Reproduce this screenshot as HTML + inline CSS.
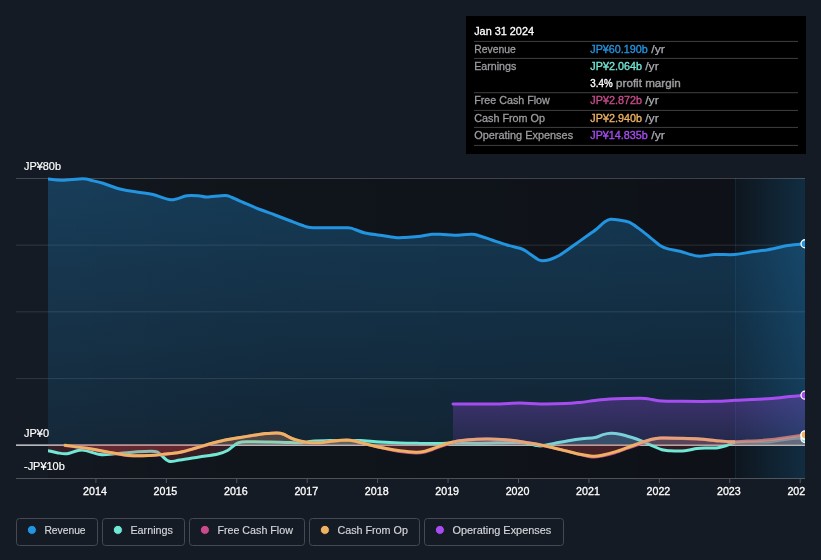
<!DOCTYPE html>
<html lang="en"><head><meta charset="utf-8"><title>Earnings and Revenue History</title>
<style>html,body{margin:0;padding:0;background:#151b24;overflow:hidden}svg{display:block}text{filter:url(#noLCD)}</style></head>
<body>
<svg width="821" height="560" viewBox="0 0 821 560" font-family="'Liberation Sans', Arial, sans-serif" font-size="11">
<defs>
<clipPath id="plot"><rect x="48" y="170" width="757" height="308.5"/></clipPath>
<clipPath id="past"><rect x="48" y="170" width="687" height="308.5"/></clipPath>
<clipPath id="fut"><rect x="735" y="170" width="70" height="308.5"/></clipPath>
<clipPath id="neg"><rect x="48" y="444.4" width="757" height="34.10000000000002"/></clipPath>
<clipPath id="pos"><rect x="48" y="170" width="757" height="274.4"/></clipPath>
<linearGradient id="gRev" x1="0" y1="0" x2="0" y2="1"><stop offset="0" stop-color="#2394df" stop-opacity="0.30"/><stop offset="1" stop-color="#2394df" stop-opacity="0.13"/></linearGradient>
<linearGradient id="gOpex" x1="0" y1="0" x2="0" y2="1"><stop offset="0" stop-color="#a64df0" stop-opacity="0.30"/><stop offset="1" stop-color="#a64df0" stop-opacity="0.12"/></linearGradient>
<linearGradient id="gPlot" x1="0" y1="0" x2="1" y2="0"><stop offset="0" stop-color="#000" stop-opacity="0.10"/><stop offset="0.3" stop-color="#000" stop-opacity="0.24"/><stop offset="1" stop-color="#000" stop-opacity="0.34"/></linearGradient>
<linearGradient id="gHi" x1="0" y1="0" x2="1" y2="0"><stop offset="0" stop-color="#2394df" stop-opacity="0.035"/><stop offset="1" stop-color="#2394df" stop-opacity="0.21"/></linearGradient>
<filter id="noLCD" x="-5%" y="-50%" width="110%" height="200%" color-interpolation-filters="sRGB"><feOffset dx="0" dy="0"/></filter>
</defs>
<rect width="821" height="560" fill="#151b24"/>
<rect x="48" y="178" width="687" height="300.5" fill="url(#gPlot)"/>
<rect x="735" y="178" width="70" height="300.5" fill="#000" fill-opacity="0.34"/>
<rect x="735" y="178" width="70" height="300.5" fill="url(#gHi)"/>
<rect x="735" y="178" width="1" height="300.5" fill="#2394df" fill-opacity="0.12"/>
<rect x="16" y="178" width="789" height="1" fill="#fff" fill-opacity="0.2"/>
<rect x="16" y="244.65" width="789" height="1" fill="#fff" fill-opacity="0.12"/>
<rect x="16" y="311.3" width="789" height="1" fill="#fff" fill-opacity="0.12"/>
<rect x="16" y="378.1" width="789" height="1" fill="#fff" fill-opacity="0.12"/>
<g clip-path="url(#plot)">
<g clip-path="url(#pos)"><path d="M48.00,179.00 C50.33,179.21 56.17,180.29 62.00,180.25 C67.83,180.21 78.00,178.71 83.00,178.75 C88.00,178.79 88.67,179.75 92.00,180.50 C95.33,181.25 98.83,181.96 103.00,183.25 C107.17,184.54 113.00,187.04 117.00,188.25 C121.00,189.46 123.17,189.79 127.00,190.50 C130.83,191.21 135.67,191.83 140.00,192.50 C144.33,193.17 147.83,193.29 153.00,194.50 C158.17,195.71 165.33,199.54 171.00,199.75 C176.67,199.96 182.17,196.38 187.00,195.75 C191.83,195.12 196.67,195.79 200.00,196.00 C203.33,196.21 202.83,197.08 207.00,197.00 C211.17,196.92 220.83,195.42 225.00,195.50 C229.17,195.58 228.67,196.21 232.00,197.50 C235.33,198.79 240.33,201.25 245.00,203.25 C249.67,205.25 255.00,207.54 260.00,209.50 C265.00,211.46 270.00,213.12 275.00,215.00 C280.00,216.88 285.50,219.04 290.00,220.75 C294.50,222.46 298.67,224.12 302.00,225.25 C305.33,226.38 306.17,227.08 310.00,227.50 C313.83,227.92 318.67,227.71 325.00,227.75 C331.33,227.79 343.00,227.46 348.00,227.75 C353.00,228.04 352.17,228.62 355.00,229.50 C357.83,230.38 360.83,232.04 365.00,233.00 C369.17,233.96 375.00,234.50 380.00,235.25 C385.00,236.00 390.83,237.12 395.00,237.50 C399.17,237.88 401.17,237.67 405.00,237.50 C408.83,237.33 413.50,237.04 418.00,236.50 C422.50,235.96 427.83,234.58 432.00,234.25 C436.17,233.92 439.17,234.33 443.00,234.50 C446.83,234.67 450.17,235.29 455.00,235.25 C459.83,235.21 467.83,234.12 472.00,234.25 C476.17,234.38 476.67,235.04 480.00,236.00 C483.33,236.96 487.50,238.50 492.00,240.00 C496.50,241.50 502.00,243.50 507.00,245.00 C512.00,246.50 518.17,247.50 522.00,249.00 C525.83,250.50 527.33,252.25 530.00,254.00 C532.67,255.75 536.00,258.38 538.00,259.50 C540.00,260.62 540.00,260.75 542.00,260.75 C544.00,260.75 547.00,260.46 550.00,259.50 C553.00,258.54 555.83,257.50 560.00,255.00 C564.17,252.50 570.00,248.04 575.00,244.50 C580.00,240.96 586.50,236.25 590.00,233.75 C593.50,231.25 593.58,231.46 596.00,229.50 C598.42,227.54 602.08,223.70 604.50,222.00 C606.92,220.30 607.92,219.60 610.50,219.30 C613.08,219.00 616.92,219.72 620.00,220.20 C623.08,220.68 626.00,220.92 629.00,222.20 C632.00,223.48 634.50,225.38 638.00,227.90 C641.50,230.42 646.33,234.38 650.00,237.30 C653.67,240.22 657.00,243.47 660.00,245.40 C663.00,247.33 664.67,247.92 668.00,248.90 C671.33,249.88 675.00,250.10 680.00,251.30 C685.00,252.50 692.17,255.57 698.00,256.10 C703.83,256.63 708.83,254.77 715.00,254.50 C721.17,254.23 728.83,254.95 735.00,254.50 C741.17,254.05 746.50,252.60 752.00,251.80 C757.50,251.00 762.00,250.73 768.00,249.70 C774.00,248.67 781.83,246.59 788.00,245.60 C794.17,244.61 802.17,244.06 805.00,243.75 L805.00,444.40 L48.00,444.40 Z" fill="url(#gRev)"/></g>
<path d="M48.00,179.00 C50.33,179.21 56.17,180.29 62.00,180.25 C67.83,180.21 78.00,178.71 83.00,178.75 C88.00,178.79 88.67,179.75 92.00,180.50 C95.33,181.25 98.83,181.96 103.00,183.25 C107.17,184.54 113.00,187.04 117.00,188.25 C121.00,189.46 123.17,189.79 127.00,190.50 C130.83,191.21 135.67,191.83 140.00,192.50 C144.33,193.17 147.83,193.29 153.00,194.50 C158.17,195.71 165.33,199.54 171.00,199.75 C176.67,199.96 182.17,196.38 187.00,195.75 C191.83,195.12 196.67,195.79 200.00,196.00 C203.33,196.21 202.83,197.08 207.00,197.00 C211.17,196.92 220.83,195.42 225.00,195.50 C229.17,195.58 228.67,196.21 232.00,197.50 C235.33,198.79 240.33,201.25 245.00,203.25 C249.67,205.25 255.00,207.54 260.00,209.50 C265.00,211.46 270.00,213.12 275.00,215.00 C280.00,216.88 285.50,219.04 290.00,220.75 C294.50,222.46 298.67,224.12 302.00,225.25 C305.33,226.38 306.17,227.08 310.00,227.50 C313.83,227.92 318.67,227.71 325.00,227.75 C331.33,227.79 343.00,227.46 348.00,227.75 C353.00,228.04 352.17,228.62 355.00,229.50 C357.83,230.38 360.83,232.04 365.00,233.00 C369.17,233.96 375.00,234.50 380.00,235.25 C385.00,236.00 390.83,237.12 395.00,237.50 C399.17,237.88 401.17,237.67 405.00,237.50 C408.83,237.33 413.50,237.04 418.00,236.50 C422.50,235.96 427.83,234.58 432.00,234.25 C436.17,233.92 439.17,234.33 443.00,234.50 C446.83,234.67 450.17,235.29 455.00,235.25 C459.83,235.21 467.83,234.12 472.00,234.25 C476.17,234.38 476.67,235.04 480.00,236.00 C483.33,236.96 487.50,238.50 492.00,240.00 C496.50,241.50 502.00,243.50 507.00,245.00 C512.00,246.50 518.17,247.50 522.00,249.00 C525.83,250.50 527.33,252.25 530.00,254.00 C532.67,255.75 536.00,258.38 538.00,259.50 C540.00,260.62 540.00,260.75 542.00,260.75 C544.00,260.75 547.00,260.46 550.00,259.50 C553.00,258.54 555.83,257.50 560.00,255.00 C564.17,252.50 570.00,248.04 575.00,244.50 C580.00,240.96 586.50,236.25 590.00,233.75 C593.50,231.25 593.58,231.46 596.00,229.50 C598.42,227.54 602.08,223.70 604.50,222.00 C606.92,220.30 607.92,219.60 610.50,219.30 C613.08,219.00 616.92,219.72 620.00,220.20 C623.08,220.68 626.00,220.92 629.00,222.20 C632.00,223.48 634.50,225.38 638.00,227.90 C641.50,230.42 646.33,234.38 650.00,237.30 C653.67,240.22 657.00,243.47 660.00,245.40 C663.00,247.33 664.67,247.92 668.00,248.90 C671.33,249.88 675.00,250.10 680.00,251.30 C685.00,252.50 692.17,255.57 698.00,256.10 C703.83,256.63 708.83,254.77 715.00,254.50 C721.17,254.23 728.83,254.95 735.00,254.50 C741.17,254.05 746.50,252.60 752.00,251.80 C757.50,251.00 762.00,250.73 768.00,249.70 C774.00,248.67 781.83,246.59 788.00,245.60 C794.17,244.61 802.17,244.06 805.00,243.75" fill="none" stroke="#2394df" stroke-width="3" stroke-linejoin="round" stroke-linecap="round"/>
</g>
<rect x="16" y="444.4" width="789" height="1.5" fill="#c6c9cd"/>
<g clip-path="url(#plot)">
<g clip-path="url(#pos)"><path d="M48.00,450.60 C49.50,450.95 53.83,452.18 57.00,452.70 C60.17,453.22 62.83,454.20 67.00,453.75 C71.17,453.30 76.50,449.88 82.00,450.00 C87.50,450.12 94.50,453.88 100.00,454.50 C105.50,455.12 109.17,454.17 115.00,453.75 C120.83,453.33 128.33,452.38 135.00,452.00 C141.67,451.62 150.67,451.00 155.00,451.50 C159.33,452.00 158.67,453.37 161.00,455.00 C163.33,456.63 165.83,460.47 169.00,461.30 C172.17,462.13 175.00,460.72 180.00,460.00 C185.00,459.28 192.67,458.00 199.00,457.00 C205.33,456.00 213.17,455.13 218.00,454.00 C222.83,452.87 224.67,452.03 228.00,450.20 C231.33,448.37 234.33,444.40 238.00,443.00 C241.67,441.60 244.67,441.97 250.00,441.80 C255.33,441.63 263.33,441.87 270.00,442.00 C276.67,442.13 284.17,442.53 290.00,442.60 C295.83,442.67 301.67,442.60 305.00,442.40 C308.33,442.20 305.83,441.72 310.00,441.40 C314.17,441.08 323.83,440.65 330.00,440.50 C336.17,440.35 342.00,440.50 347.00,440.50 C352.00,440.50 354.50,440.25 360.00,440.50 C365.50,440.75 373.33,441.58 380.00,442.00 C386.67,442.42 393.33,442.77 400.00,443.00 C406.67,443.23 413.33,443.30 420.00,443.40 C426.67,443.50 434.50,443.67 440.00,443.60 C445.50,443.53 446.33,443.07 453.00,443.00 C459.67,442.93 468.83,443.28 480.00,443.20 C491.17,443.12 510.83,442.15 520.00,442.50 C529.17,442.85 531.33,444.75 535.00,445.30 C538.67,445.85 538.67,446.13 542.00,445.80 C545.33,445.47 550.33,444.20 555.00,443.30 C559.67,442.40 565.50,441.17 570.00,440.40 C574.50,439.63 577.83,439.18 582.00,438.70 C586.17,438.22 591.50,438.18 595.00,437.50 C598.50,436.82 600.33,435.30 603.00,434.60 C605.67,433.90 608.17,433.37 611.00,433.30 C613.83,433.23 616.50,433.50 620.00,434.20 C623.50,434.90 628.33,436.33 632.00,437.50 C635.67,438.67 638.67,439.85 642.00,441.20 C645.33,442.55 648.67,444.17 652.00,445.60 C655.33,447.03 659.00,448.95 662.00,449.80 C665.00,450.65 666.17,450.55 670.00,450.70 C673.83,450.85 680.50,451.07 685.00,450.70 C689.50,450.33 693.17,448.95 697.00,448.50 C700.83,448.05 704.50,448.12 708.00,448.00 C711.50,447.88 714.83,448.23 718.00,447.80 C721.17,447.37 724.17,446.30 727.00,445.40 C729.83,444.50 731.17,442.97 735.00,442.40 C738.83,441.83 744.17,442.12 750.00,442.00 C755.83,441.88 763.33,442.25 770.00,441.70 C776.67,441.15 784.17,439.32 790.00,438.70 C795.83,438.08 802.50,438.12 805.00,438.00 L805.00,444.40 L48.00,444.40 Z" fill="#71e7d6" fill-opacity="0.22"/></g>
<g clip-path="url(#neg)"><path d="M48.00,450.60 C49.50,450.95 53.83,452.18 57.00,452.70 C60.17,453.22 62.83,454.20 67.00,453.75 C71.17,453.30 76.50,449.88 82.00,450.00 C87.50,450.12 94.50,453.88 100.00,454.50 C105.50,455.12 109.17,454.17 115.00,453.75 C120.83,453.33 128.33,452.38 135.00,452.00 C141.67,451.62 150.67,451.00 155.00,451.50 C159.33,452.00 158.67,453.37 161.00,455.00 C163.33,456.63 165.83,460.47 169.00,461.30 C172.17,462.13 175.00,460.72 180.00,460.00 C185.00,459.28 192.67,458.00 199.00,457.00 C205.33,456.00 213.17,455.13 218.00,454.00 C222.83,452.87 224.67,452.03 228.00,450.20 C231.33,448.37 234.33,444.40 238.00,443.00 C241.67,441.60 244.67,441.97 250.00,441.80 C255.33,441.63 263.33,441.87 270.00,442.00 C276.67,442.13 284.17,442.53 290.00,442.60 C295.83,442.67 301.67,442.60 305.00,442.40 C308.33,442.20 305.83,441.72 310.00,441.40 C314.17,441.08 323.83,440.65 330.00,440.50 C336.17,440.35 342.00,440.50 347.00,440.50 C352.00,440.50 354.50,440.25 360.00,440.50 C365.50,440.75 373.33,441.58 380.00,442.00 C386.67,442.42 393.33,442.77 400.00,443.00 C406.67,443.23 413.33,443.30 420.00,443.40 C426.67,443.50 434.50,443.67 440.00,443.60 C445.50,443.53 446.33,443.07 453.00,443.00 C459.67,442.93 468.83,443.28 480.00,443.20 C491.17,443.12 510.83,442.15 520.00,442.50 C529.17,442.85 531.33,444.75 535.00,445.30 C538.67,445.85 538.67,446.13 542.00,445.80 C545.33,445.47 550.33,444.20 555.00,443.30 C559.67,442.40 565.50,441.17 570.00,440.40 C574.50,439.63 577.83,439.18 582.00,438.70 C586.17,438.22 591.50,438.18 595.00,437.50 C598.50,436.82 600.33,435.30 603.00,434.60 C605.67,433.90 608.17,433.37 611.00,433.30 C613.83,433.23 616.50,433.50 620.00,434.20 C623.50,434.90 628.33,436.33 632.00,437.50 C635.67,438.67 638.67,439.85 642.00,441.20 C645.33,442.55 648.67,444.17 652.00,445.60 C655.33,447.03 659.00,448.95 662.00,449.80 C665.00,450.65 666.17,450.55 670.00,450.70 C673.83,450.85 680.50,451.07 685.00,450.70 C689.50,450.33 693.17,448.95 697.00,448.50 C700.83,448.05 704.50,448.12 708.00,448.00 C711.50,447.88 714.83,448.23 718.00,447.80 C721.17,447.37 724.17,446.30 727.00,445.40 C729.83,444.50 731.17,442.97 735.00,442.40 C738.83,441.83 744.17,442.12 750.00,442.00 C755.83,441.88 763.33,442.25 770.00,441.70 C776.67,441.15 784.17,439.32 790.00,438.70 C795.83,438.08 802.50,438.12 805.00,438.00 L805.00,444.40 L48.00,444.40 Z" fill="#e2464f" fill-opacity="0.175"/></g>
<g clip-path="url(#past)"><path d="M48.00,450.60 C49.50,450.95 53.83,452.18 57.00,452.70 C60.17,453.22 62.83,454.20 67.00,453.75 C71.17,453.30 76.50,449.88 82.00,450.00 C87.50,450.12 94.50,453.88 100.00,454.50 C105.50,455.12 109.17,454.17 115.00,453.75 C120.83,453.33 128.33,452.38 135.00,452.00 C141.67,451.62 150.67,451.00 155.00,451.50 C159.33,452.00 158.67,453.37 161.00,455.00 C163.33,456.63 165.83,460.47 169.00,461.30 C172.17,462.13 175.00,460.72 180.00,460.00 C185.00,459.28 192.67,458.00 199.00,457.00 C205.33,456.00 213.17,455.13 218.00,454.00 C222.83,452.87 224.67,452.03 228.00,450.20 C231.33,448.37 234.33,444.40 238.00,443.00 C241.67,441.60 244.67,441.97 250.00,441.80 C255.33,441.63 263.33,441.87 270.00,442.00 C276.67,442.13 284.17,442.53 290.00,442.60 C295.83,442.67 301.67,442.60 305.00,442.40 C308.33,442.20 305.83,441.72 310.00,441.40 C314.17,441.08 323.83,440.65 330.00,440.50 C336.17,440.35 342.00,440.50 347.00,440.50 C352.00,440.50 354.50,440.25 360.00,440.50 C365.50,440.75 373.33,441.58 380.00,442.00 C386.67,442.42 393.33,442.77 400.00,443.00 C406.67,443.23 413.33,443.30 420.00,443.40 C426.67,443.50 434.50,443.67 440.00,443.60 C445.50,443.53 446.33,443.07 453.00,443.00 C459.67,442.93 468.83,443.28 480.00,443.20 C491.17,443.12 510.83,442.15 520.00,442.50 C529.17,442.85 531.33,444.75 535.00,445.30 C538.67,445.85 538.67,446.13 542.00,445.80 C545.33,445.47 550.33,444.20 555.00,443.30 C559.67,442.40 565.50,441.17 570.00,440.40 C574.50,439.63 577.83,439.18 582.00,438.70 C586.17,438.22 591.50,438.18 595.00,437.50 C598.50,436.82 600.33,435.30 603.00,434.60 C605.67,433.90 608.17,433.37 611.00,433.30 C613.83,433.23 616.50,433.50 620.00,434.20 C623.50,434.90 628.33,436.33 632.00,437.50 C635.67,438.67 638.67,439.85 642.00,441.20 C645.33,442.55 648.67,444.17 652.00,445.60 C655.33,447.03 659.00,448.95 662.00,449.80 C665.00,450.65 666.17,450.55 670.00,450.70 C673.83,450.85 680.50,451.07 685.00,450.70 C689.50,450.33 693.17,448.95 697.00,448.50 C700.83,448.05 704.50,448.12 708.00,448.00 C711.50,447.88 714.83,448.23 718.00,447.80 C721.17,447.37 724.17,446.30 727.00,445.40 C729.83,444.50 731.17,442.97 735.00,442.40 C738.83,441.83 744.17,442.12 750.00,442.00 C755.83,441.88 763.33,442.25 770.00,441.70 C776.67,441.15 784.17,439.32 790.00,438.70 C795.83,438.08 802.50,438.12 805.00,438.00" fill="none" stroke="#71e7d6" stroke-width="3" stroke-linejoin="round" stroke-linecap="round"/></g>
<g clip-path="url(#fut)" opacity="0.55"><path d="M48.00,450.60 C49.50,450.95 53.83,452.18 57.00,452.70 C60.17,453.22 62.83,454.20 67.00,453.75 C71.17,453.30 76.50,449.88 82.00,450.00 C87.50,450.12 94.50,453.88 100.00,454.50 C105.50,455.12 109.17,454.17 115.00,453.75 C120.83,453.33 128.33,452.38 135.00,452.00 C141.67,451.62 150.67,451.00 155.00,451.50 C159.33,452.00 158.67,453.37 161.00,455.00 C163.33,456.63 165.83,460.47 169.00,461.30 C172.17,462.13 175.00,460.72 180.00,460.00 C185.00,459.28 192.67,458.00 199.00,457.00 C205.33,456.00 213.17,455.13 218.00,454.00 C222.83,452.87 224.67,452.03 228.00,450.20 C231.33,448.37 234.33,444.40 238.00,443.00 C241.67,441.60 244.67,441.97 250.00,441.80 C255.33,441.63 263.33,441.87 270.00,442.00 C276.67,442.13 284.17,442.53 290.00,442.60 C295.83,442.67 301.67,442.60 305.00,442.40 C308.33,442.20 305.83,441.72 310.00,441.40 C314.17,441.08 323.83,440.65 330.00,440.50 C336.17,440.35 342.00,440.50 347.00,440.50 C352.00,440.50 354.50,440.25 360.00,440.50 C365.50,440.75 373.33,441.58 380.00,442.00 C386.67,442.42 393.33,442.77 400.00,443.00 C406.67,443.23 413.33,443.30 420.00,443.40 C426.67,443.50 434.50,443.67 440.00,443.60 C445.50,443.53 446.33,443.07 453.00,443.00 C459.67,442.93 468.83,443.28 480.00,443.20 C491.17,443.12 510.83,442.15 520.00,442.50 C529.17,442.85 531.33,444.75 535.00,445.30 C538.67,445.85 538.67,446.13 542.00,445.80 C545.33,445.47 550.33,444.20 555.00,443.30 C559.67,442.40 565.50,441.17 570.00,440.40 C574.50,439.63 577.83,439.18 582.00,438.70 C586.17,438.22 591.50,438.18 595.00,437.50 C598.50,436.82 600.33,435.30 603.00,434.60 C605.67,433.90 608.17,433.37 611.00,433.30 C613.83,433.23 616.50,433.50 620.00,434.20 C623.50,434.90 628.33,436.33 632.00,437.50 C635.67,438.67 638.67,439.85 642.00,441.20 C645.33,442.55 648.67,444.17 652.00,445.60 C655.33,447.03 659.00,448.95 662.00,449.80 C665.00,450.65 666.17,450.55 670.00,450.70 C673.83,450.85 680.50,451.07 685.00,450.70 C689.50,450.33 693.17,448.95 697.00,448.50 C700.83,448.05 704.50,448.12 708.00,448.00 C711.50,447.88 714.83,448.23 718.00,447.80 C721.17,447.37 724.17,446.30 727.00,445.40 C729.83,444.50 731.17,442.97 735.00,442.40 C738.83,441.83 744.17,442.12 750.00,442.00 C755.83,441.88 763.33,442.25 770.00,441.70 C776.67,441.15 784.17,439.32 790.00,438.70 C795.83,438.08 802.50,438.12 805.00,438.00" fill="none" stroke="#71e7d6" stroke-width="3" stroke-linejoin="round" stroke-linecap="round"/></g>
</g>
<g clip-path="url(#plot)">
<g clip-path="url(#pos)"><path d="M65.00,445.40 C69.17,445.98 82.50,447.69 90.00,448.90 C97.50,450.11 103.33,451.52 110.00,452.65 C116.67,453.77 123.33,455.17 130.00,455.65 C136.67,456.13 144.17,455.78 150.00,455.55 C155.83,455.32 160.00,454.78 165.00,454.25 C170.00,453.72 175.00,453.32 180.00,452.35 C185.00,451.38 190.00,449.85 195.00,448.45 C200.00,447.05 205.00,445.33 210.00,443.95 C215.00,442.57 220.00,441.20 225.00,440.15 C230.00,439.10 235.00,438.48 240.00,437.65 C245.00,436.82 250.83,435.80 255.00,435.15 C259.17,434.50 261.33,434.10 265.00,433.75 C268.67,433.40 274.00,432.98 277.00,433.05 C280.00,433.12 280.50,433.22 283.00,434.15 C285.50,435.08 289.17,437.48 292.00,438.65 C294.83,439.82 297.33,440.50 300.00,441.15 C302.67,441.80 304.67,442.25 308.00,442.55 C311.33,442.85 316.33,443.12 320.00,442.95 C323.67,442.78 325.50,442.00 330.00,441.55 C334.50,441.10 342.67,440.25 347.00,440.25 C351.33,440.25 352.17,440.73 356.00,441.55 C359.83,442.37 365.17,444.00 370.00,445.15 C374.83,446.30 380.00,447.38 385.00,448.45 C390.00,449.52 394.83,450.84 400.00,451.60 C405.17,452.36 411.83,452.93 416.00,453.00 C420.17,453.07 421.83,452.72 425.00,452.00 C428.17,451.28 431.67,449.87 435.00,448.70 C438.33,447.53 442.00,446.09 445.00,445.00 C448.00,443.91 450.17,442.89 453.00,442.15 C455.83,441.41 458.00,441.02 462.00,440.55 C466.00,440.08 472.33,439.58 477.00,439.35 C481.67,439.12 485.33,439.07 490.00,439.15 C494.67,439.23 500.00,439.45 505.00,439.85 C510.00,440.25 515.00,440.87 520.00,441.55 C525.00,442.23 530.00,443.02 535.00,443.95 C540.00,444.88 545.00,446.02 550.00,447.15 C555.00,448.28 560.00,449.53 565.00,450.75 C570.00,451.97 575.33,453.41 580.00,454.45 C584.67,455.49 589.17,456.77 593.00,457.00 C596.83,457.23 599.33,456.52 603.00,455.80 C606.67,455.08 610.83,453.98 615.00,452.70 C619.17,451.42 623.83,449.58 628.00,448.10 C632.17,446.62 636.33,445.16 640.00,443.80 C643.67,442.44 646.67,440.89 650.00,439.95 C653.33,439.01 655.00,438.40 660.00,438.15 C665.00,437.90 673.33,438.28 680.00,438.45 C686.67,438.62 694.17,438.78 700.00,439.15 C705.83,439.52 710.00,440.20 715.00,440.65 C720.00,441.10 725.00,441.73 730.00,441.85 C735.00,441.97 740.00,441.55 745.00,441.35 C750.00,441.15 755.00,440.98 760.00,440.65 C765.00,440.32 770.00,439.93 775.00,439.35 C780.00,438.77 785.00,437.88 790.00,437.15 C795.00,436.42 802.50,435.32 805.00,434.95 L805.00,444.40 L65.00,444.40 Z" fill="#c84b8c" fill-opacity="0.08"/></g>
<g clip-path="url(#neg)"><path d="M65.00,445.40 C69.17,445.98 82.50,447.69 90.00,448.90 C97.50,450.11 103.33,451.52 110.00,452.65 C116.67,453.77 123.33,455.17 130.00,455.65 C136.67,456.13 144.17,455.78 150.00,455.55 C155.83,455.32 160.00,454.78 165.00,454.25 C170.00,453.72 175.00,453.32 180.00,452.35 C185.00,451.38 190.00,449.85 195.00,448.45 C200.00,447.05 205.00,445.33 210.00,443.95 C215.00,442.57 220.00,441.20 225.00,440.15 C230.00,439.10 235.00,438.48 240.00,437.65 C245.00,436.82 250.83,435.80 255.00,435.15 C259.17,434.50 261.33,434.10 265.00,433.75 C268.67,433.40 274.00,432.98 277.00,433.05 C280.00,433.12 280.50,433.22 283.00,434.15 C285.50,435.08 289.17,437.48 292.00,438.65 C294.83,439.82 297.33,440.50 300.00,441.15 C302.67,441.80 304.67,442.25 308.00,442.55 C311.33,442.85 316.33,443.12 320.00,442.95 C323.67,442.78 325.50,442.00 330.00,441.55 C334.50,441.10 342.67,440.25 347.00,440.25 C351.33,440.25 352.17,440.73 356.00,441.55 C359.83,442.37 365.17,444.00 370.00,445.15 C374.83,446.30 380.00,447.38 385.00,448.45 C390.00,449.52 394.83,450.84 400.00,451.60 C405.17,452.36 411.83,452.93 416.00,453.00 C420.17,453.07 421.83,452.72 425.00,452.00 C428.17,451.28 431.67,449.87 435.00,448.70 C438.33,447.53 442.00,446.09 445.00,445.00 C448.00,443.91 450.17,442.89 453.00,442.15 C455.83,441.41 458.00,441.02 462.00,440.55 C466.00,440.08 472.33,439.58 477.00,439.35 C481.67,439.12 485.33,439.07 490.00,439.15 C494.67,439.23 500.00,439.45 505.00,439.85 C510.00,440.25 515.00,440.87 520.00,441.55 C525.00,442.23 530.00,443.02 535.00,443.95 C540.00,444.88 545.00,446.02 550.00,447.15 C555.00,448.28 560.00,449.53 565.00,450.75 C570.00,451.97 575.33,453.41 580.00,454.45 C584.67,455.49 589.17,456.77 593.00,457.00 C596.83,457.23 599.33,456.52 603.00,455.80 C606.67,455.08 610.83,453.98 615.00,452.70 C619.17,451.42 623.83,449.58 628.00,448.10 C632.17,446.62 636.33,445.16 640.00,443.80 C643.67,442.44 646.67,440.89 650.00,439.95 C653.33,439.01 655.00,438.40 660.00,438.15 C665.00,437.90 673.33,438.28 680.00,438.45 C686.67,438.62 694.17,438.78 700.00,439.15 C705.83,439.52 710.00,440.20 715.00,440.65 C720.00,441.10 725.00,441.73 730.00,441.85 C735.00,441.97 740.00,441.55 745.00,441.35 C750.00,441.15 755.00,440.98 760.00,440.65 C765.00,440.32 770.00,439.93 775.00,439.35 C780.00,438.77 785.00,437.88 790.00,437.15 C795.00,436.42 802.50,435.32 805.00,434.95 L805.00,444.40 L65.00,444.40 Z" fill="#e2464f" fill-opacity="0.14"/></g>
<g clip-path="url(#past)"><path d="M65.00,445.40 C69.17,445.98 82.50,447.69 90.00,448.90 C97.50,450.11 103.33,451.52 110.00,452.65 C116.67,453.77 123.33,455.17 130.00,455.65 C136.67,456.13 144.17,455.78 150.00,455.55 C155.83,455.32 160.00,454.78 165.00,454.25 C170.00,453.72 175.00,453.32 180.00,452.35 C185.00,451.38 190.00,449.85 195.00,448.45 C200.00,447.05 205.00,445.33 210.00,443.95 C215.00,442.57 220.00,441.20 225.00,440.15 C230.00,439.10 235.00,438.48 240.00,437.65 C245.00,436.82 250.83,435.80 255.00,435.15 C259.17,434.50 261.33,434.10 265.00,433.75 C268.67,433.40 274.00,432.98 277.00,433.05 C280.00,433.12 280.50,433.22 283.00,434.15 C285.50,435.08 289.17,437.48 292.00,438.65 C294.83,439.82 297.33,440.50 300.00,441.15 C302.67,441.80 304.67,442.25 308.00,442.55 C311.33,442.85 316.33,443.12 320.00,442.95 C323.67,442.78 325.50,442.00 330.00,441.55 C334.50,441.10 342.67,440.25 347.00,440.25 C351.33,440.25 352.17,440.73 356.00,441.55 C359.83,442.37 365.17,444.00 370.00,445.15 C374.83,446.30 380.00,447.38 385.00,448.45 C390.00,449.52 394.83,450.84 400.00,451.60 C405.17,452.36 411.83,452.93 416.00,453.00 C420.17,453.07 421.83,452.72 425.00,452.00 C428.17,451.28 431.67,449.87 435.00,448.70 C438.33,447.53 442.00,446.09 445.00,445.00 C448.00,443.91 450.17,442.89 453.00,442.15 C455.83,441.41 458.00,441.02 462.00,440.55 C466.00,440.08 472.33,439.58 477.00,439.35 C481.67,439.12 485.33,439.07 490.00,439.15 C494.67,439.23 500.00,439.45 505.00,439.85 C510.00,440.25 515.00,440.87 520.00,441.55 C525.00,442.23 530.00,443.02 535.00,443.95 C540.00,444.88 545.00,446.02 550.00,447.15 C555.00,448.28 560.00,449.53 565.00,450.75 C570.00,451.97 575.33,453.41 580.00,454.45 C584.67,455.49 589.17,456.77 593.00,457.00 C596.83,457.23 599.33,456.52 603.00,455.80 C606.67,455.08 610.83,453.98 615.00,452.70 C619.17,451.42 623.83,449.58 628.00,448.10 C632.17,446.62 636.33,445.16 640.00,443.80 C643.67,442.44 646.67,440.89 650.00,439.95 C653.33,439.01 655.00,438.40 660.00,438.15 C665.00,437.90 673.33,438.28 680.00,438.45 C686.67,438.62 694.17,438.78 700.00,439.15 C705.83,439.52 710.00,440.20 715.00,440.65 C720.00,441.10 725.00,441.73 730.00,441.85 C735.00,441.97 740.00,441.55 745.00,441.35 C750.00,441.15 755.00,440.98 760.00,440.65 C765.00,440.32 770.00,439.93 775.00,439.35 C780.00,438.77 785.00,437.88 790.00,437.15 C795.00,436.42 802.50,435.32 805.00,434.95" fill="none" stroke="#c84b8c" stroke-width="3" stroke-linejoin="round" stroke-linecap="round"/></g>
<g clip-path="url(#fut)" opacity="0.55"><path d="M65.00,445.40 C69.17,445.98 82.50,447.69 90.00,448.90 C97.50,450.11 103.33,451.52 110.00,452.65 C116.67,453.77 123.33,455.17 130.00,455.65 C136.67,456.13 144.17,455.78 150.00,455.55 C155.83,455.32 160.00,454.78 165.00,454.25 C170.00,453.72 175.00,453.32 180.00,452.35 C185.00,451.38 190.00,449.85 195.00,448.45 C200.00,447.05 205.00,445.33 210.00,443.95 C215.00,442.57 220.00,441.20 225.00,440.15 C230.00,439.10 235.00,438.48 240.00,437.65 C245.00,436.82 250.83,435.80 255.00,435.15 C259.17,434.50 261.33,434.10 265.00,433.75 C268.67,433.40 274.00,432.98 277.00,433.05 C280.00,433.12 280.50,433.22 283.00,434.15 C285.50,435.08 289.17,437.48 292.00,438.65 C294.83,439.82 297.33,440.50 300.00,441.15 C302.67,441.80 304.67,442.25 308.00,442.55 C311.33,442.85 316.33,443.12 320.00,442.95 C323.67,442.78 325.50,442.00 330.00,441.55 C334.50,441.10 342.67,440.25 347.00,440.25 C351.33,440.25 352.17,440.73 356.00,441.55 C359.83,442.37 365.17,444.00 370.00,445.15 C374.83,446.30 380.00,447.38 385.00,448.45 C390.00,449.52 394.83,450.84 400.00,451.60 C405.17,452.36 411.83,452.93 416.00,453.00 C420.17,453.07 421.83,452.72 425.00,452.00 C428.17,451.28 431.67,449.87 435.00,448.70 C438.33,447.53 442.00,446.09 445.00,445.00 C448.00,443.91 450.17,442.89 453.00,442.15 C455.83,441.41 458.00,441.02 462.00,440.55 C466.00,440.08 472.33,439.58 477.00,439.35 C481.67,439.12 485.33,439.07 490.00,439.15 C494.67,439.23 500.00,439.45 505.00,439.85 C510.00,440.25 515.00,440.87 520.00,441.55 C525.00,442.23 530.00,443.02 535.00,443.95 C540.00,444.88 545.00,446.02 550.00,447.15 C555.00,448.28 560.00,449.53 565.00,450.75 C570.00,451.97 575.33,453.41 580.00,454.45 C584.67,455.49 589.17,456.77 593.00,457.00 C596.83,457.23 599.33,456.52 603.00,455.80 C606.67,455.08 610.83,453.98 615.00,452.70 C619.17,451.42 623.83,449.58 628.00,448.10 C632.17,446.62 636.33,445.16 640.00,443.80 C643.67,442.44 646.67,440.89 650.00,439.95 C653.33,439.01 655.00,438.40 660.00,438.15 C665.00,437.90 673.33,438.28 680.00,438.45 C686.67,438.62 694.17,438.78 700.00,439.15 C705.83,439.52 710.00,440.20 715.00,440.65 C720.00,441.10 725.00,441.73 730.00,441.85 C735.00,441.97 740.00,441.55 745.00,441.35 C750.00,441.15 755.00,440.98 760.00,440.65 C765.00,440.32 770.00,439.93 775.00,439.35 C780.00,438.77 785.00,437.88 790.00,437.15 C795.00,436.42 802.50,435.32 805.00,434.95" fill="none" stroke="#c84b8c" stroke-width="3" stroke-linejoin="round" stroke-linecap="round"/></g>
</g>
<g clip-path="url(#plot)">
<g clip-path="url(#pos)"><path d="M65.00,445.25 C69.17,445.83 82.50,447.54 90.00,448.75 C97.50,449.96 103.33,451.38 110.00,452.50 C116.67,453.62 123.33,455.02 130.00,455.50 C136.67,455.98 144.17,455.63 150.00,455.40 C155.83,455.17 160.00,454.63 165.00,454.10 C170.00,453.57 175.00,453.17 180.00,452.20 C185.00,451.23 190.00,449.70 195.00,448.30 C200.00,446.90 205.00,445.18 210.00,443.80 C215.00,442.42 220.00,441.05 225.00,440.00 C230.00,438.95 235.00,438.33 240.00,437.50 C245.00,436.67 250.83,435.65 255.00,435.00 C259.17,434.35 261.33,433.95 265.00,433.60 C268.67,433.25 274.00,432.83 277.00,432.90 C280.00,432.97 280.50,433.07 283.00,434.00 C285.50,434.93 289.17,437.33 292.00,438.50 C294.83,439.67 297.33,440.35 300.00,441.00 C302.67,441.65 304.67,442.10 308.00,442.40 C311.33,442.70 316.33,442.97 320.00,442.80 C323.67,442.63 325.50,441.85 330.00,441.40 C334.50,440.95 342.67,440.10 347.00,440.10 C351.33,440.10 352.17,440.58 356.00,441.40 C359.83,442.22 365.17,443.85 370.00,445.00 C374.83,446.15 380.00,447.33 385.00,448.30 C390.00,449.27 394.83,450.15 400.00,450.80 C405.17,451.45 411.83,452.13 416.00,452.20 C420.17,452.27 421.83,451.92 425.00,451.20 C428.17,450.48 431.67,449.07 435.00,447.90 C438.33,446.73 442.00,445.18 445.00,444.20 C448.00,443.22 450.17,442.63 453.00,442.00 C455.83,441.37 458.00,440.87 462.00,440.40 C466.00,439.93 472.33,439.43 477.00,439.20 C481.67,438.97 485.33,438.92 490.00,439.00 C494.67,439.08 500.00,439.30 505.00,439.70 C510.00,440.10 515.00,440.72 520.00,441.40 C525.00,442.08 530.00,442.87 535.00,443.80 C540.00,444.73 545.00,445.87 550.00,447.00 C555.00,448.13 560.00,449.38 565.00,450.60 C570.00,451.82 575.33,453.37 580.00,454.30 C584.67,455.23 589.17,456.08 593.00,456.20 C596.83,456.32 599.33,455.72 603.00,455.00 C606.67,454.28 610.83,453.18 615.00,451.90 C619.17,450.62 623.83,448.78 628.00,447.30 C632.17,445.82 636.33,444.25 640.00,443.00 C643.67,441.75 646.67,440.63 650.00,439.80 C653.33,438.97 655.00,438.25 660.00,438.00 C665.00,437.75 673.33,438.13 680.00,438.30 C686.67,438.47 694.17,438.63 700.00,439.00 C705.83,439.37 710.00,440.05 715.00,440.50 C720.00,440.95 725.00,441.58 730.00,441.70 C735.00,441.82 740.00,441.40 745.00,441.20 C750.00,441.00 755.00,440.83 760.00,440.50 C765.00,440.17 770.00,439.78 775.00,439.20 C780.00,438.62 785.00,437.73 790.00,437.00 C795.00,436.27 802.50,435.17 805.00,434.80 L805.00,444.40 L65.00,444.40 Z" fill="#eeb263" fill-opacity="0.22"/></g>
<g clip-path="url(#neg)"><path d="M65.00,445.25 C69.17,445.83 82.50,447.54 90.00,448.75 C97.50,449.96 103.33,451.38 110.00,452.50 C116.67,453.62 123.33,455.02 130.00,455.50 C136.67,455.98 144.17,455.63 150.00,455.40 C155.83,455.17 160.00,454.63 165.00,454.10 C170.00,453.57 175.00,453.17 180.00,452.20 C185.00,451.23 190.00,449.70 195.00,448.30 C200.00,446.90 205.00,445.18 210.00,443.80 C215.00,442.42 220.00,441.05 225.00,440.00 C230.00,438.95 235.00,438.33 240.00,437.50 C245.00,436.67 250.83,435.65 255.00,435.00 C259.17,434.35 261.33,433.95 265.00,433.60 C268.67,433.25 274.00,432.83 277.00,432.90 C280.00,432.97 280.50,433.07 283.00,434.00 C285.50,434.93 289.17,437.33 292.00,438.50 C294.83,439.67 297.33,440.35 300.00,441.00 C302.67,441.65 304.67,442.10 308.00,442.40 C311.33,442.70 316.33,442.97 320.00,442.80 C323.67,442.63 325.50,441.85 330.00,441.40 C334.50,440.95 342.67,440.10 347.00,440.10 C351.33,440.10 352.17,440.58 356.00,441.40 C359.83,442.22 365.17,443.85 370.00,445.00 C374.83,446.15 380.00,447.33 385.00,448.30 C390.00,449.27 394.83,450.15 400.00,450.80 C405.17,451.45 411.83,452.13 416.00,452.20 C420.17,452.27 421.83,451.92 425.00,451.20 C428.17,450.48 431.67,449.07 435.00,447.90 C438.33,446.73 442.00,445.18 445.00,444.20 C448.00,443.22 450.17,442.63 453.00,442.00 C455.83,441.37 458.00,440.87 462.00,440.40 C466.00,439.93 472.33,439.43 477.00,439.20 C481.67,438.97 485.33,438.92 490.00,439.00 C494.67,439.08 500.00,439.30 505.00,439.70 C510.00,440.10 515.00,440.72 520.00,441.40 C525.00,442.08 530.00,442.87 535.00,443.80 C540.00,444.73 545.00,445.87 550.00,447.00 C555.00,448.13 560.00,449.38 565.00,450.60 C570.00,451.82 575.33,453.37 580.00,454.30 C584.67,455.23 589.17,456.08 593.00,456.20 C596.83,456.32 599.33,455.72 603.00,455.00 C606.67,454.28 610.83,453.18 615.00,451.90 C619.17,450.62 623.83,448.78 628.00,447.30 C632.17,445.82 636.33,444.25 640.00,443.00 C643.67,441.75 646.67,440.63 650.00,439.80 C653.33,438.97 655.00,438.25 660.00,438.00 C665.00,437.75 673.33,438.13 680.00,438.30 C686.67,438.47 694.17,438.63 700.00,439.00 C705.83,439.37 710.00,440.05 715.00,440.50 C720.00,440.95 725.00,441.58 730.00,441.70 C735.00,441.82 740.00,441.40 745.00,441.20 C750.00,441.00 755.00,440.83 760.00,440.50 C765.00,440.17 770.00,439.78 775.00,439.20 C780.00,438.62 785.00,437.73 790.00,437.00 C795.00,436.27 802.50,435.17 805.00,434.80 L805.00,444.40 L65.00,444.40 Z" fill="#e2464f" fill-opacity="0.14"/></g>
<g clip-path="url(#past)"><path d="M65.00,445.25 C69.17,445.83 82.50,447.54 90.00,448.75 C97.50,449.96 103.33,451.38 110.00,452.50 C116.67,453.62 123.33,455.02 130.00,455.50 C136.67,455.98 144.17,455.63 150.00,455.40 C155.83,455.17 160.00,454.63 165.00,454.10 C170.00,453.57 175.00,453.17 180.00,452.20 C185.00,451.23 190.00,449.70 195.00,448.30 C200.00,446.90 205.00,445.18 210.00,443.80 C215.00,442.42 220.00,441.05 225.00,440.00 C230.00,438.95 235.00,438.33 240.00,437.50 C245.00,436.67 250.83,435.65 255.00,435.00 C259.17,434.35 261.33,433.95 265.00,433.60 C268.67,433.25 274.00,432.83 277.00,432.90 C280.00,432.97 280.50,433.07 283.00,434.00 C285.50,434.93 289.17,437.33 292.00,438.50 C294.83,439.67 297.33,440.35 300.00,441.00 C302.67,441.65 304.67,442.10 308.00,442.40 C311.33,442.70 316.33,442.97 320.00,442.80 C323.67,442.63 325.50,441.85 330.00,441.40 C334.50,440.95 342.67,440.10 347.00,440.10 C351.33,440.10 352.17,440.58 356.00,441.40 C359.83,442.22 365.17,443.85 370.00,445.00 C374.83,446.15 380.00,447.33 385.00,448.30 C390.00,449.27 394.83,450.15 400.00,450.80 C405.17,451.45 411.83,452.13 416.00,452.20 C420.17,452.27 421.83,451.92 425.00,451.20 C428.17,450.48 431.67,449.07 435.00,447.90 C438.33,446.73 442.00,445.18 445.00,444.20 C448.00,443.22 450.17,442.63 453.00,442.00 C455.83,441.37 458.00,440.87 462.00,440.40 C466.00,439.93 472.33,439.43 477.00,439.20 C481.67,438.97 485.33,438.92 490.00,439.00 C494.67,439.08 500.00,439.30 505.00,439.70 C510.00,440.10 515.00,440.72 520.00,441.40 C525.00,442.08 530.00,442.87 535.00,443.80 C540.00,444.73 545.00,445.87 550.00,447.00 C555.00,448.13 560.00,449.38 565.00,450.60 C570.00,451.82 575.33,453.37 580.00,454.30 C584.67,455.23 589.17,456.08 593.00,456.20 C596.83,456.32 599.33,455.72 603.00,455.00 C606.67,454.28 610.83,453.18 615.00,451.90 C619.17,450.62 623.83,448.78 628.00,447.30 C632.17,445.82 636.33,444.25 640.00,443.00 C643.67,441.75 646.67,440.63 650.00,439.80 C653.33,438.97 655.00,438.25 660.00,438.00 C665.00,437.75 673.33,438.13 680.00,438.30 C686.67,438.47 694.17,438.63 700.00,439.00 C705.83,439.37 710.00,440.05 715.00,440.50 C720.00,440.95 725.00,441.58 730.00,441.70 C735.00,441.82 740.00,441.40 745.00,441.20 C750.00,441.00 755.00,440.83 760.00,440.50 C765.00,440.17 770.00,439.78 775.00,439.20 C780.00,438.62 785.00,437.73 790.00,437.00 C795.00,436.27 802.50,435.17 805.00,434.80" fill="none" stroke="#eeb263" stroke-width="3" stroke-linejoin="round" stroke-linecap="round"/></g>
<g clip-path="url(#fut)" opacity="0.55"><path d="M65.00,445.25 C69.17,445.83 82.50,447.54 90.00,448.75 C97.50,449.96 103.33,451.38 110.00,452.50 C116.67,453.62 123.33,455.02 130.00,455.50 C136.67,455.98 144.17,455.63 150.00,455.40 C155.83,455.17 160.00,454.63 165.00,454.10 C170.00,453.57 175.00,453.17 180.00,452.20 C185.00,451.23 190.00,449.70 195.00,448.30 C200.00,446.90 205.00,445.18 210.00,443.80 C215.00,442.42 220.00,441.05 225.00,440.00 C230.00,438.95 235.00,438.33 240.00,437.50 C245.00,436.67 250.83,435.65 255.00,435.00 C259.17,434.35 261.33,433.95 265.00,433.60 C268.67,433.25 274.00,432.83 277.00,432.90 C280.00,432.97 280.50,433.07 283.00,434.00 C285.50,434.93 289.17,437.33 292.00,438.50 C294.83,439.67 297.33,440.35 300.00,441.00 C302.67,441.65 304.67,442.10 308.00,442.40 C311.33,442.70 316.33,442.97 320.00,442.80 C323.67,442.63 325.50,441.85 330.00,441.40 C334.50,440.95 342.67,440.10 347.00,440.10 C351.33,440.10 352.17,440.58 356.00,441.40 C359.83,442.22 365.17,443.85 370.00,445.00 C374.83,446.15 380.00,447.33 385.00,448.30 C390.00,449.27 394.83,450.15 400.00,450.80 C405.17,451.45 411.83,452.13 416.00,452.20 C420.17,452.27 421.83,451.92 425.00,451.20 C428.17,450.48 431.67,449.07 435.00,447.90 C438.33,446.73 442.00,445.18 445.00,444.20 C448.00,443.22 450.17,442.63 453.00,442.00 C455.83,441.37 458.00,440.87 462.00,440.40 C466.00,439.93 472.33,439.43 477.00,439.20 C481.67,438.97 485.33,438.92 490.00,439.00 C494.67,439.08 500.00,439.30 505.00,439.70 C510.00,440.10 515.00,440.72 520.00,441.40 C525.00,442.08 530.00,442.87 535.00,443.80 C540.00,444.73 545.00,445.87 550.00,447.00 C555.00,448.13 560.00,449.38 565.00,450.60 C570.00,451.82 575.33,453.37 580.00,454.30 C584.67,455.23 589.17,456.08 593.00,456.20 C596.83,456.32 599.33,455.72 603.00,455.00 C606.67,454.28 610.83,453.18 615.00,451.90 C619.17,450.62 623.83,448.78 628.00,447.30 C632.17,445.82 636.33,444.25 640.00,443.00 C643.67,441.75 646.67,440.63 650.00,439.80 C653.33,438.97 655.00,438.25 660.00,438.00 C665.00,437.75 673.33,438.13 680.00,438.30 C686.67,438.47 694.17,438.63 700.00,439.00 C705.83,439.37 710.00,440.05 715.00,440.50 C720.00,440.95 725.00,441.58 730.00,441.70 C735.00,441.82 740.00,441.40 745.00,441.20 C750.00,441.00 755.00,440.83 760.00,440.50 C765.00,440.17 770.00,439.78 775.00,439.20 C780.00,438.62 785.00,437.73 790.00,437.00 C795.00,436.27 802.50,435.17 805.00,434.80" fill="none" stroke="#eeb263" stroke-width="3" stroke-linejoin="round" stroke-linecap="round"/></g>
</g>
<g clip-path="url(#plot)">
<g clip-path="url(#pos)"><path d="M453.00,404.10 C457.50,404.07 472.17,403.93 480.00,403.90 C487.83,403.87 493.33,404.03 500.00,403.90 C506.67,403.77 513.33,403.10 520.00,403.10 C526.67,403.10 532.50,403.82 540.00,403.90 C547.50,403.98 558.33,403.85 565.00,403.60 C571.67,403.35 575.00,402.92 580.00,402.40 C585.00,401.88 590.00,401.07 595.00,400.50 C600.00,399.93 605.00,399.33 610.00,399.00 C615.00,398.67 619.17,398.60 625.00,398.50 C630.83,398.40 640.50,398.22 645.00,398.40 C649.50,398.58 649.17,399.17 652.00,399.60 C654.83,400.03 657.33,400.72 662.00,401.00 C666.67,401.28 671.17,401.25 680.00,401.30 C688.83,401.35 705.83,401.47 715.00,401.30 C724.17,401.13 728.83,400.58 735.00,400.30 C741.17,400.02 745.83,399.92 752.00,399.60 C758.17,399.28 765.67,398.90 772.00,398.40 C778.33,397.90 784.50,397.13 790.00,396.60 C795.50,396.07 802.50,395.43 805.00,395.20 L805.00,444.40 L453.00,444.40 Z" fill="url(#gOpex)"/></g>
<path d="M453.00,404.10 C457.50,404.07 472.17,403.93 480.00,403.90 C487.83,403.87 493.33,404.03 500.00,403.90 C506.67,403.77 513.33,403.10 520.00,403.10 C526.67,403.10 532.50,403.82 540.00,403.90 C547.50,403.98 558.33,403.85 565.00,403.60 C571.67,403.35 575.00,402.92 580.00,402.40 C585.00,401.88 590.00,401.07 595.00,400.50 C600.00,399.93 605.00,399.33 610.00,399.00 C615.00,398.67 619.17,398.60 625.00,398.50 C630.83,398.40 640.50,398.22 645.00,398.40 C649.50,398.58 649.17,399.17 652.00,399.60 C654.83,400.03 657.33,400.72 662.00,401.00 C666.67,401.28 671.17,401.25 680.00,401.30 C688.83,401.35 705.83,401.47 715.00,401.30 C724.17,401.13 728.83,400.58 735.00,400.30 C741.17,400.02 745.83,399.92 752.00,399.60 C758.17,399.28 765.67,398.90 772.00,398.40 C778.33,397.90 784.50,397.13 790.00,396.60 C795.50,396.07 802.50,395.43 805.00,395.20" fill="none" stroke="#a64df0" stroke-width="3" stroke-linejoin="round" stroke-linecap="round"/>
</g>
<g clip-path="url(#plot)">
<circle cx="805" cy="243.75" r="4" fill="#2394df" stroke="#fff" stroke-width="1.3"/>
<circle cx="805" cy="438.5" r="4" fill="#71e7d6" stroke="#fff" stroke-width="1.3"/>
<circle cx="805" cy="435.6" r="4" fill="#c84b8c" stroke="#fff" stroke-width="1.3"/>
<circle cx="805" cy="434.8" r="4" fill="#eeb263" stroke="#fff" stroke-width="1.3"/>
<circle cx="805" cy="395.2" r="4" fill="#a64df0" stroke="#fff" stroke-width="1.3"/>
</g>
<rect x="16" y="478.0" width="789" height="1" fill="#fff" fill-opacity="0.25"/>
<g clip-path="url(#xl)">
</g>
<defs><clipPath id="xl"><rect x="0" y="476" width="805" height="25"/></clipPath></defs>
<g fill="#fff" stroke="#fff" stroke-width="0.3" text-anchor="middle" clip-path="url(#xl)">
<rect x="95.40" y="479.0" width="1" height="4" fill="#fff" fill-opacity="0.25" stroke="none"/>
<text x="95.00" y="495" textLength="23.8" lengthAdjust="spacingAndGlyphs">2014</text>
<rect x="165.83" y="479.0" width="1" height="4" fill="#fff" fill-opacity="0.25" stroke="none"/>
<text x="165.43" y="495" textLength="23.8" lengthAdjust="spacingAndGlyphs">2015</text>
<rect x="236.26" y="479.0" width="1" height="4" fill="#fff" fill-opacity="0.25" stroke="none"/>
<text x="235.86" y="495" textLength="23.8" lengthAdjust="spacingAndGlyphs">2016</text>
<rect x="306.69" y="479.0" width="1" height="4" fill="#fff" fill-opacity="0.25" stroke="none"/>
<text x="306.29" y="495" textLength="23.8" lengthAdjust="spacingAndGlyphs">2017</text>
<rect x="377.12" y="479.0" width="1" height="4" fill="#fff" fill-opacity="0.25" stroke="none"/>
<text x="376.72" y="495" textLength="23.8" lengthAdjust="spacingAndGlyphs">2018</text>
<rect x="447.55" y="479.0" width="1" height="4" fill="#fff" fill-opacity="0.25" stroke="none"/>
<text x="447.15" y="495" textLength="23.8" lengthAdjust="spacingAndGlyphs">2019</text>
<rect x="517.98" y="479.0" width="1" height="4" fill="#fff" fill-opacity="0.25" stroke="none"/>
<text x="517.58" y="495" textLength="23.8" lengthAdjust="spacingAndGlyphs">2020</text>
<rect x="588.41" y="479.0" width="1" height="4" fill="#fff" fill-opacity="0.25" stroke="none"/>
<text x="588.01" y="495" textLength="23.8" lengthAdjust="spacingAndGlyphs">2021</text>
<rect x="658.84" y="479.0" width="1" height="4" fill="#fff" fill-opacity="0.25" stroke="none"/>
<text x="658.44" y="495" textLength="23.8" lengthAdjust="spacingAndGlyphs">2022</text>
<rect x="729.27" y="479.0" width="1" height="4" fill="#fff" fill-opacity="0.25" stroke="none"/>
<text x="728.87" y="495" textLength="23.8" lengthAdjust="spacingAndGlyphs">2023</text>
<rect x="799.70" y="479.0" width="1" height="4" fill="#fff" fill-opacity="0.25" stroke="none"/>
<text x="799.30" y="495" textLength="23.8" lengthAdjust="spacingAndGlyphs">2024</text>
</g>
<g fill="#fff" stroke="#fff" stroke-width="0.2">
<text x="24" y="170" textLength="37" lengthAdjust="spacingAndGlyphs">JP¥80b</text>
<text x="24" y="436.6" textLength="25" lengthAdjust="spacingAndGlyphs">JP¥0</text>
<text x="24" y="469.8" textLength="40.8" lengthAdjust="spacingAndGlyphs">-JP¥10b</text>
</g>
<rect x="466" y="16" width="340" height="138" fill="#000"/>
<rect x="474" y="40.9" width="324" height="1" fill="#fff" fill-opacity="0.25"/>
<rect x="474" y="57.9" width="324" height="1" fill="#fff" fill-opacity="0.25"/>
<rect x="474" y="92.2" width="324" height="1" fill="#fff" fill-opacity="0.25"/>
<rect x="474" y="109.9" width="324" height="1" fill="#fff" fill-opacity="0.25"/>
<rect x="474" y="126.9" width="324" height="1" fill="#fff" fill-opacity="0.25"/>
<rect x="474" y="144.9" width="324" height="1" fill="#fff" fill-opacity="0.25"/>
<text x="474.2" y="34.6" textLength="59.8" lengthAdjust="spacingAndGlyphs" fill="#fff" stroke="#fff" stroke-width="0.3">Jan 31 2024</text>
<text x="474.2" y="52.7" textLength="41.6" lengthAdjust="spacingAndGlyphs" fill="#9c9da0" stroke="#9c9da0" stroke-width="0.3">Revenue</text>
<text x="590.3" y="52.7" textLength="57.5" lengthAdjust="spacingAndGlyphs" fill="#2394df" stroke="#2394df" stroke-width="0.35">JP¥60.190b</text>
<text x="651.3" y="52.7" textLength="13.5" lengthAdjust="spacingAndGlyphs" fill="#a9acb1" stroke="#a9acb1" stroke-width="0.25">/yr</text>
<text x="474.2" y="69.7" textLength="42.1" lengthAdjust="spacingAndGlyphs" fill="#9c9da0" stroke="#9c9da0" stroke-width="0.3">Earnings</text>
<text x="590.3" y="69.7" textLength="51.6" lengthAdjust="spacingAndGlyphs" fill="#71e7d6" stroke="#71e7d6" stroke-width="0.35">JP¥2.064b</text>
<text x="645.2" y="69.7" textLength="13.5" lengthAdjust="spacingAndGlyphs" fill="#a9acb1" stroke="#a9acb1" stroke-width="0.25">/yr</text>
<text x="474.2" y="103.9" textLength="75.6" lengthAdjust="spacingAndGlyphs" fill="#9c9da0" stroke="#9c9da0" stroke-width="0.3">Free Cash Flow</text>
<text x="590.3" y="103.9" textLength="51.6" lengthAdjust="spacingAndGlyphs" fill="#c84b8c" stroke="#c84b8c" stroke-width="0.35">JP¥2.872b</text>
<text x="645.2" y="103.9" textLength="13.5" lengthAdjust="spacingAndGlyphs" fill="#a9acb1" stroke="#a9acb1" stroke-width="0.25">/yr</text>
<text x="474.2" y="121.8" textLength="70.8" lengthAdjust="spacingAndGlyphs" fill="#9c9da0" stroke="#9c9da0" stroke-width="0.3">Cash From Op</text>
<text x="590.3" y="121.8" textLength="51.6" lengthAdjust="spacingAndGlyphs" fill="#eeb263" stroke="#eeb263" stroke-width="0.35">JP¥2.940b</text>
<text x="645.2" y="121.8" textLength="13.5" lengthAdjust="spacingAndGlyphs" fill="#a9acb1" stroke="#a9acb1" stroke-width="0.25">/yr</text>
<text x="474.2" y="139.0" textLength="98.9" lengthAdjust="spacingAndGlyphs" fill="#9c9da0" stroke="#9c9da0" stroke-width="0.3">Operating Expenses</text>
<text x="590.3" y="139.0" textLength="57.5" lengthAdjust="spacingAndGlyphs" fill="#a64df0" stroke="#a64df0" stroke-width="0.35">JP¥14.835b</text>
<text x="651.3" y="139.0" textLength="13.5" lengthAdjust="spacingAndGlyphs" fill="#a9acb1" stroke="#a9acb1" stroke-width="0.25">/yr</text>
<text x="590.3" y="86.9" textLength="22.3" lengthAdjust="spacingAndGlyphs" fill="#fff" stroke="#fff" stroke-width="0.35">3.4%</text>
<text x="616.1" y="86.9" textLength="64.6" lengthAdjust="spacingAndGlyphs" fill="#9c9da0" stroke="#9c9da0" stroke-width="0.4">profit margin</text>
<rect x="16.5" y="518.5" width="81.0" height="27" rx="3" fill="none" stroke="#444a55" stroke-width="1"/>
<circle cx="31.9" cy="529.9" r="4.5" fill="#2394df" stroke="#0e1218" stroke-width="0.8"/>
<text x="44.4" y="534.3" textLength="41.2" lengthAdjust="spacingAndGlyphs" fill="#d5d8dc" stroke="#d5d8dc" stroke-width="0.15">Revenue</text>
<rect x="102.5" y="518.5" width="82.0" height="27" rx="3" fill="none" stroke="#444a55" stroke-width="1"/>
<circle cx="117.9" cy="529.9" r="4.5" fill="#71e7d6" stroke="#0e1218" stroke-width="0.8"/>
<text x="130.4" y="534.3" textLength="42.5" lengthAdjust="spacingAndGlyphs" fill="#d5d8dc" stroke="#d5d8dc" stroke-width="0.15">Earnings</text>
<rect x="189.5" y="518.5" width="115.0" height="27" rx="3" fill="none" stroke="#444a55" stroke-width="1"/>
<circle cx="204.9" cy="529.9" r="4.5" fill="#c84b8c" stroke="#0e1218" stroke-width="0.8"/>
<text x="217.4" y="534.3" textLength="75.5" lengthAdjust="spacingAndGlyphs" fill="#d5d8dc" stroke="#d5d8dc" stroke-width="0.15">Free Cash Flow</text>
<rect x="309.5" y="518.5" width="110.0" height="27" rx="3" fill="none" stroke="#444a55" stroke-width="1"/>
<circle cx="324.9" cy="529.9" r="4.5" fill="#eeb263" stroke="#0e1218" stroke-width="0.8"/>
<text x="337.4" y="534.3" textLength="70.5" lengthAdjust="spacingAndGlyphs" fill="#d5d8dc" stroke="#d5d8dc" stroke-width="0.15">Cash From Op</text>
<rect x="424.5" y="518.5" width="139.0" height="27" rx="3" fill="none" stroke="#444a55" stroke-width="1"/>
<circle cx="439.9" cy="529.9" r="4.5" fill="#a64df0" stroke="#0e1218" stroke-width="0.8"/>
<text x="452.4" y="534.3" textLength="98.9" lengthAdjust="spacingAndGlyphs" fill="#d5d8dc" stroke="#d5d8dc" stroke-width="0.15">Operating Expenses</text>
</svg>
</body></html>
